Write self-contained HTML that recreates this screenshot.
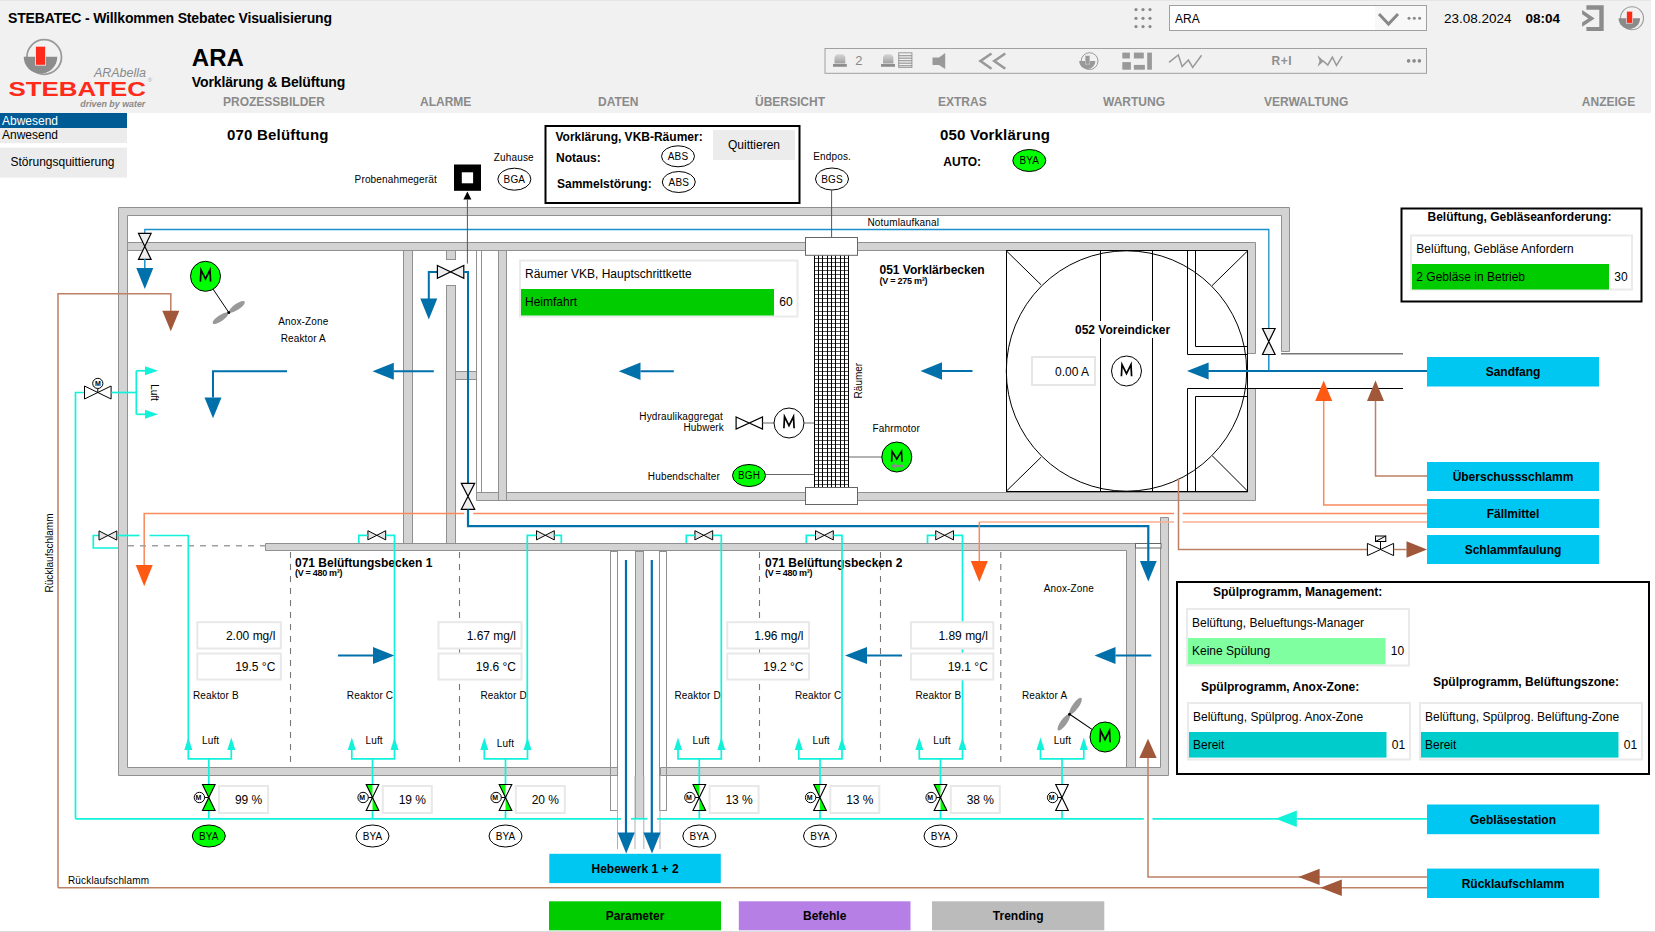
<!DOCTYPE html>
<html><head><meta charset="utf-8"><title>STEBATEC</title>
<style>
html,body{margin:0;padding:0;background:#fff;width:1655px;height:932px;overflow:hidden}
svg{display:block;font-family:"Liberation Sans", sans-serif}
text{font-family:"Liberation Sans", sans-serif}
</style></head><body>
<svg width="1655" height="932" viewBox="0 0 1655 932">
<rect x="0" y="0" width="1655" height="932" fill="#fff"/>
<rect x="0" y="931" width="1655" height="1" fill="#dcdcdc"/>
<rect x="0" y="0" width="1651" height="113" fill="#f1f1f1"/>
<rect x="0" y="0" width="1651" height="1" fill="#e6e6e6"/>
<text x="8" y="22.6" font-size="14" font-weight="bold" textLength="324">STEBATEC - Willkommen Stebatec Visualisierung</text>
<circle cx="44.2" cy="57" r="17.3" fill="none" stroke="#9a9a9a" stroke-width="1.8"/>
<path d="M23.7,56.8 A16.8,16.8 0 0 0 57.3,56.8 Z" fill="#8c8c8c"/>
<rect x="35.6" y="46.2" width="10" height="19" fill="#ff2a1a" stroke="#f1f1f1" stroke-width="0.8"/>
<text x="146" y="76.6" font-size="12.5" font-style="italic" fill="#8a8a8a" text-anchor="end">ARAbella</text>
<text x="8.5" y="95.7" font-size="19.3" font-weight="bold" fill="#ff2a1a" textLength="137.5" lengthAdjust="spacingAndGlyphs">STEBATEC</text>
<text x="150" y="82" font-size="6" fill="#aaa" text-anchor="middle">®</text>
<text x="80.3" y="106.6" font-size="9" font-style="italic" font-weight="bold" fill="#8a8a8a" textLength="65" lengthAdjust="spacingAndGlyphs">driven by water</text>
<text x="191.8" y="66.2" font-size="24" font-weight="bold">ARA</text>
<text x="191.8" y="87" font-size="14" font-weight="bold" textLength="153.5">Vorklärung &amp; Belüftung</text>
<text x="223" y="105.7" font-size="12" font-weight="bold" fill="#8a8a8a">PROZESSBILDER</text>
<text x="420" y="105.7" font-size="12" font-weight="bold" fill="#8a8a8a">ALARME</text>
<text x="598" y="105.7" font-size="12" font-weight="bold" fill="#8a8a8a">DATEN</text>
<text x="755" y="105.7" font-size="12" font-weight="bold" fill="#8a8a8a">ÜBERSICHT</text>
<text x="938" y="105.7" font-size="12" font-weight="bold" fill="#8a8a8a">EXTRAS</text>
<text x="1103" y="105.7" font-size="12" font-weight="bold" fill="#8a8a8a">WARTUNG</text>
<text x="1264" y="105.7" font-size="12" font-weight="bold" fill="#8a8a8a">VERWALTUNG</text>
<text x="1581.8" y="105.7" font-size="12" font-weight="bold" fill="#8a8a8a">ANZEIGE</text>
<circle cx="1136" cy="9.6" r="1.6" fill="#8a8a8a"/>
<circle cx="1136" cy="18.3" r="1.6" fill="#8a8a8a"/>
<circle cx="1136" cy="26.6" r="1.6" fill="#8a8a8a"/>
<circle cx="1143" cy="9.6" r="1.6" fill="#8a8a8a"/>
<circle cx="1143" cy="18.3" r="1.6" fill="#8a8a8a"/>
<circle cx="1143" cy="26.6" r="1.6" fill="#8a8a8a"/>
<circle cx="1150" cy="9.6" r="1.6" fill="#8a8a8a"/>
<circle cx="1150" cy="18.3" r="1.6" fill="#8a8a8a"/>
<circle cx="1150" cy="26.6" r="1.6" fill="#8a8a8a"/>
<rect x="1169.5" y="5.5" width="257" height="25" fill="#fff" stroke="#a0a0a0" stroke-width="1"/>
<rect x="1375" y="6" width="51" height="24" fill="#f8f8f8"/>
<text x="1175" y="22.8" font-size="12">ARA</text>
<path d="M1379,14 L1388.5,24 L1398,14" fill="none" stroke="#888" stroke-width="3"/>
<circle cx="1409" cy="18.3" r="1.5" fill="#888"/>
<circle cx="1414.3" cy="18.3" r="1.5" fill="#888"/>
<circle cx="1419.6" cy="18.3" r="1.5" fill="#888"/>
<text x="1443.9" y="23.1" font-size="13.5">23.08.2024</text>
<text x="1525.6" y="23.1" font-size="13.5" font-weight="bold">08:04</text>
<path d="M1582.1,10 L1594.7,18.4 L1582.1,26.7 L1582.1,22.4 L1588.3,18.4 L1582.1,14.3 Z" fill="#8c8c8c"/>
<path d="M1586.4,5.3 L1603.7,5.3 L1603.7,31 L1586.4,31 L1586.4,27 L1599.3,27 L1599.3,9.8 L1586.4,9.8 Z" fill="#8c8c8c"/>
<circle cx="1632" cy="18.25" r="11.5" fill="none" stroke="#9c9c9c" stroke-width="1.1"/>
<path d="M1618.6,18.25 A10.75,10.75 0 0 0 1640.1,18.25 Z" fill="#8a8a8a"/>
<rect x="1626.6" y="11.2" width="6" height="12" fill="#ff2a14" stroke="#f4f4f4" stroke-width="0.6"/>
<defs><linearGradient id="lampg" x1="0" y1="0" x2="0" y2="1"><stop offset="0" stop-color="#d6d6d6"/><stop offset="1" stop-color="#a0a0a0"/></linearGradient></defs>
<rect x="825" y="48.5" width="601.5" height="24.8" fill="none" stroke="#a0a0a0" stroke-width="1"/>
<path d="M834.5,63.6 L834.5,58.2 Q834.5,54.2 838.5,54.2 L841.3,54.2 Q845.3,54.2 845.3,58.2 L845.3,63.6 Z" fill="url(#lampg)"/>
<rect x="833" y="64" width="13.799999999999955" height="2.8" fill="#8e8e8e"/>
<text x="855.3" y="64.9" font-size="13" fill="#888">2</text>
<path d="M883,63.6 L883,58.2 Q883,54.2 887,54.2 L889.4,54.2 Q893.4,54.2 893.4,58.2 L893.4,63.6 Z" fill="url(#lampg)"/>
<rect x="881" y="64" width="14" height="2.8" fill="#8e8e8e"/>
<rect x="898.7" y="52.8" width="13.2" height="14.6" fill="none" stroke="#999999" stroke-width="1"/>
<rect x="898.5" y="55.1" width="13.5" height="1.2" fill="#999999"/>
<rect x="898.5" y="57.6" width="13.5" height="1.2" fill="#999999"/>
<rect x="898.5" y="60.1" width="13.5" height="1.2" fill="#999999"/>
<rect x="898.5" y="62.6" width="13.5" height="1.2" fill="#999999"/>
<rect x="898.5" y="65.1" width="13.5" height="1.2" fill="#999999"/>
<path d="M932.5,57.5 L939,57.5 L945.2,53 L945.2,69 L939,64.9 L932.5,64.9 Z" fill="#999999"/>
<path d="M991.5,53.5 L980.5,61 L991.5,68.7 M1005.3,53.5 L994.3,61 L1005.3,68.7" fill="none" stroke="#999999" stroke-width="2.6" stroke-linejoin="miter"/>
<circle cx="1089.6" cy="61.1" r="8.4" fill="none" stroke="#999999" stroke-width="1"/>
<path d="M1079.1,61.1 A8.15,8.15 0 0 0 1095.4,61.1 Z" fill="#999999"/>
<rect x="1085" y="55.5" width="5" height="9" fill="#c8c8c8"/>
<rect x="1085.7" y="56" width="3.6" height="7.8" fill="#999999"/>
<rect x="1122.3" y="52.6" width="7.6" height="5.9" fill="#999999"/><rect x="1133.9" y="52.6" width="9.9" height="5.9" fill="#999999"/><rect x="1122.3" y="62.1" width="8.6" height="7.6" fill="#999999"/><rect x="1133.9" y="64.9" width="11" height="4.8" fill="#999999"/><rect x="1147.2" y="52.6" width="4.7" height="17.1" fill="#999999"/>
<path d="M1169,62.3 L1178.3,55 L1182.1,66.6 L1188.4,60.1 L1192.7,67.4 L1201.6,55.3" fill="none" stroke="#999999" stroke-width="1.5"/>
<text x="1271.5" y="64.7" font-size="12" font-weight="bold" fill="#8f8f8f" textLength="20">R+I</text>
<path d="M1317.5,55.3 L1323.9,60.9 L1317.5,66.8 L1319.5,60.9 Z" fill="#999999"/><path d="M1323,60.9 L1327.8,65 L1332.4,57.1 L1336.5,65.5 L1342.2,56.1" fill="none" stroke="#999999" stroke-width="1.5"/>
<circle cx="1408.6" cy="60.9" r="1.8" fill="#8a8a8a"/>
<circle cx="1414.1" cy="60.9" r="1.8" fill="#8a8a8a"/>
<circle cx="1419.4" cy="60.9" r="1.8" fill="#8a8a8a"/>
<rect x="0" y="113" width="127" height="15" fill="#005a94"/>
<text x="2" y="124.6" font-size="12" fill="#fff">Abwesend</text>
<rect x="0" y="128" width="127" height="15" fill="#ececec"/>
<text x="2" y="138.8" font-size="12">Anwesend</text>
<rect x="0" y="147.6" width="127" height="30" fill="#ececec"/>
<text x="62.5" y="165.9" font-size="12" text-anchor="middle">Störungsquittierung</text>
<polygon points="118.5,775.5 118.5,207.5 1289.5,207.5 1289.5,351.5 1281.5,351.5 1281.5,215.5 127.5,215.5 127.5,767.5 617.5,767.5 617.5,775.5" fill="#d3d3d3" stroke="#909090" stroke-width="1" stroke-linejoin="miter"/>
<polygon points="127.5,242.5 1255.5,242.5 1255.5,353.5 1247.5,353.5 1247.5,250.5 127.5,250.5" fill="#d3d3d3" stroke="#909090" stroke-width="1" stroke-linejoin="miter"/>
<polygon points="1247.5,388.5 1255.5,388.5 1255.5,500.5 476.5,500.5 476.5,492.5 1247.5,492.5" fill="#d3d3d3" stroke="#909090" stroke-width="1" stroke-linejoin="miter"/>
<polygon points="265.5,543.5 1135.5,543.5 1135.5,768.5 1126.5,768.5 1126.5,550.5 265.5,550.5" fill="#d3d3d3" stroke="#909090" stroke-width="1" stroke-linejoin="miter"/>
<polygon points="660.5,767.5 1160.5,767.5 1160.5,517.5 1168.5,517.5 1168.5,775.5 660.5,775.5" fill="#d3d3d3" stroke="#909090" stroke-width="1" stroke-linejoin="miter"/>
<rect x="403.5" y="250.5" width="9" height="293" fill="#d3d3d3" stroke="#909090" stroke-width="1" />
<rect x="446.5" y="250.5" width="9" height="9" fill="#d3d3d3" stroke="#909090" stroke-width="1" />
<rect x="446.5" y="285.5" width="9" height="258" fill="#d3d3d3" stroke="#909090" stroke-width="1" />
<rect x="455.5" y="371.5" width="22" height="8" fill="#d3d3d3" stroke="#909090" stroke-width="1" />
<rect x="498.5" y="250.5" width="8" height="250" fill="#d3d3d3" stroke="#909090" stroke-width="1" />
<rect x="476.5" y="250.5" width="5" height="242" fill="#fff" stroke="#909090" stroke-width="1" />
<rect x="635.5" y="551.5" width="8" height="267" fill="#d3d3d3" stroke="#909090" stroke-width="1" />
<rect x="610.5" y="551.5" width="7" height="259" fill="none" stroke="#909090" stroke-width="1" />
<rect x="659.5" y="551.5" width="7" height="259" fill="none" stroke="#909090" stroke-width="1" />
<rect x="1135.5" y="543.5" width="25.5" height="4.5" fill="#fff" stroke="#666" stroke-width="1" />
<line x1="617.5" y1="776" x2="617.5" y2="849" stroke="#b0b0b0" stroke-width="1" />
<line x1="635" y1="776" x2="635" y2="849" stroke="#b0b0b0" stroke-width="1" />
<line x1="643.8" y1="776" x2="643.8" y2="849" stroke="#b0b0b0" stroke-width="1" />
<line x1="660" y1="776" x2="660" y2="849" stroke="#b0b0b0" stroke-width="1" />
<polyline points="144.8,234 144.8,229.5 1268.8,229.5 1268.8,329" fill="none" stroke="#1b8fc9" stroke-width="1.3" stroke-linejoin="miter" />
<polygon points="138.5,233.4 151.10000000000002,233.4 138.5,259.4 151.10000000000002,259.4" fill="#eeeeee" stroke="#000" stroke-width="1.2" stroke-linejoin="miter"/>
<line x1="144.8" y1="259" x2="144.8" y2="268" stroke="#1b8fc9" stroke-width="1.5" />
<polygon points="144.8,289 136.3,268 153.3,268" fill="#0070aa" stroke="none" stroke-width="1" />
<polyline points="1268.8,354 1268.8,371" fill="none" stroke="#1b8fc9" stroke-width="1.5" stroke-linejoin="miter" />
<polygon points="1262.5,328.5 1275.1,328.5 1262.5,354.5 1275.1,354.5" fill="#eeeeee" stroke="#000" stroke-width="1.2" stroke-linejoin="miter"/>
<text x="867.5" y="225.5" font-size="10" font-weight="normal" text-anchor="start" fill="#000"  letter-spacing="0.15">Notumlaufkanal</text>
<rect x="454" y="164.5" width="27" height="26.3" fill="#000" stroke="none" stroke-width="1" />
<rect x="461.8" y="172.3" width="11.3" height="11" fill="#fff" stroke="none" stroke-width="1" />
<polygon points="467.4,191.5 463.4,199.5 471.4,199.5" fill="#000" stroke="none" stroke-width="1" />
<line x1="467.4" y1="199" x2="467.4" y2="263.6" stroke="#555" stroke-width="1" />
<text x="354.6" y="182.7" font-size="10" font-weight="normal" text-anchor="start" fill="#000"  letter-spacing="0.15">Probenahmegerät</text>
<text x="493.8" y="160.7" font-size="10" font-weight="normal" text-anchor="start" fill="#000"  letter-spacing="0.15">Zuhause</text>
<ellipse cx="514.4" cy="179.2" rx="16.5" ry="11" fill="#fff" stroke="#000" stroke-width="1"/>
<text x="514.4" y="182.79999999999998" font-size="10" font-weight="normal" text-anchor="middle" fill="#000"  letter-spacing="0.15">BGA</text>
<polyline points="428.8,304 428.8,271.9 437.5,271.9" fill="none" stroke="#0070aa" stroke-width="2" stroke-linejoin="miter" />
<polygon points="428.8,319.5 420.3,298.5 437.3,298.5" fill="#0070aa" stroke="none" stroke-width="1" />
<polygon points="437.40000000000003,265.5 463.8,278.29999999999995 463.8,265.5 437.40000000000003,278.29999999999995" fill="#eeeeee" stroke="#000" stroke-width="1.2" stroke-linejoin="miter"/>
<polyline points="463.8,271.9 468,271.9 468,483.3" fill="none" stroke="#0070aa" stroke-width="2" stroke-linejoin="miter" />
<polygon points="461.3,483.3 474.7,483.3 461.3,509.3 474.7,509.3" fill="#eeeeee" stroke="#000" stroke-width="1.2" stroke-linejoin="miter"/>
<polyline points="468,509.4 468,526.2 1148.3,526.2 1148.3,561" fill="none" stroke="#0070aa" stroke-width="2.2" stroke-linejoin="miter" />
<polygon points="1148.3,581.5 1139.8999999999999,561.0 1156.7,561.0" fill="#0070aa" stroke="none" stroke-width="1" />
<rect x="545.5" y="126" width="254" height="77" fill="#fff" stroke="#000" stroke-width="2"/>
<text x="555.5" y="140.7" font-size="12" font-weight="bold" text-anchor="start" fill="#000" >Vorklärung, VKB-Räumer:</text>
<text x="556" y="161.7" font-size="12" font-weight="bold" text-anchor="start" fill="#000" >Notaus:</text>
<text x="557" y="188" font-size="12" font-weight="bold" text-anchor="start" fill="#000" >Sammelstörung:</text>
<ellipse cx="678" cy="156.3" rx="16.5" ry="10.5" fill="#fff" stroke="#000" stroke-width="1"/>
<text x="678" y="159.9" font-size="10" font-weight="normal" text-anchor="middle" fill="#000"  letter-spacing="0.15">ABS</text>
<ellipse cx="678.8" cy="182" rx="16.5" ry="10.5" fill="#fff" stroke="#000" stroke-width="1"/>
<text x="678.8" y="185.6" font-size="10" font-weight="normal" text-anchor="middle" fill="#000"  letter-spacing="0.15">ABS</text>
<rect x="713" y="130" width="82" height="30" fill="#ececec" stroke="none" stroke-width="1" />
<text x="754" y="148.7" font-size="12" font-weight="normal" text-anchor="middle" fill="#000" >Quittieren</text>
<text x="813.3" y="160" font-size="10" font-weight="normal" text-anchor="start" fill="#000"  letter-spacing="0.15">Endpos.</text>
<ellipse cx="832" cy="179" rx="16.5" ry="11" fill="#fff" stroke="#000" stroke-width="1"/>
<text x="832" y="182.6" font-size="10" font-weight="normal" text-anchor="middle" fill="#000"  letter-spacing="0.15">BGS</text>
<line x1="831.6" y1="190" x2="831.6" y2="237.5" stroke="#555" stroke-width="1" />
<text x="227" y="139.7" font-size="15" font-weight="bold" text-anchor="start" fill="#000" textLength="101.5">070 Belüftung</text>
<text x="940" y="140" font-size="15" font-weight="bold" text-anchor="start" fill="#000" textLength="110">050 Vorklärung</text>
<text x="943.3" y="166.3" font-size="12" font-weight="bold" text-anchor="start" fill="#000" >AUTO:</text>
<ellipse cx="1029.3" cy="160.5" rx="16.5" ry="11" fill="#00ff00" stroke="#000" stroke-width="1"/>
<text x="1029.3" y="164.1" font-size="10" font-weight="normal" text-anchor="middle" fill="#000"  letter-spacing="0.15">BYA</text>
<g shape-rendering="crispEdges">
<rect x="814" y="255" width="34.5" height="232" fill="#fff" stroke="none" stroke-width="1" />
<line x1="814" y1="258.5" x2="848.5" y2="258.5" stroke="#555" stroke-width="1" />
<line x1="814" y1="262.54" x2="848.5" y2="262.54" stroke="#555" stroke-width="1" />
<line x1="814" y1="266.58000000000004" x2="848.5" y2="266.58000000000004" stroke="#555" stroke-width="1" />
<line x1="814" y1="270.62000000000006" x2="848.5" y2="270.62000000000006" stroke="#555" stroke-width="1" />
<line x1="814" y1="274.6600000000001" x2="848.5" y2="274.6600000000001" stroke="#555" stroke-width="1" />
<line x1="814" y1="278.7000000000001" x2="848.5" y2="278.7000000000001" stroke="#555" stroke-width="1" />
<line x1="814" y1="282.7400000000001" x2="848.5" y2="282.7400000000001" stroke="#555" stroke-width="1" />
<line x1="814" y1="286.78000000000014" x2="848.5" y2="286.78000000000014" stroke="#555" stroke-width="1" />
<line x1="814" y1="290.82000000000016" x2="848.5" y2="290.82000000000016" stroke="#555" stroke-width="1" />
<line x1="814" y1="294.8600000000002" x2="848.5" y2="294.8600000000002" stroke="#555" stroke-width="1" />
<line x1="814" y1="298.9000000000002" x2="848.5" y2="298.9000000000002" stroke="#555" stroke-width="1" />
<line x1="814" y1="302.9400000000002" x2="848.5" y2="302.9400000000002" stroke="#555" stroke-width="1" />
<line x1="814" y1="306.98000000000025" x2="848.5" y2="306.98000000000025" stroke="#555" stroke-width="1" />
<line x1="814" y1="311.02000000000027" x2="848.5" y2="311.02000000000027" stroke="#555" stroke-width="1" />
<line x1="814" y1="315.0600000000003" x2="848.5" y2="315.0600000000003" stroke="#555" stroke-width="1" />
<line x1="814" y1="319.1000000000003" x2="848.5" y2="319.1000000000003" stroke="#555" stroke-width="1" />
<line x1="814" y1="323.1400000000003" x2="848.5" y2="323.1400000000003" stroke="#555" stroke-width="1" />
<line x1="814" y1="327.18000000000035" x2="848.5" y2="327.18000000000035" stroke="#555" stroke-width="1" />
<line x1="814" y1="331.22000000000037" x2="848.5" y2="331.22000000000037" stroke="#555" stroke-width="1" />
<line x1="814" y1="335.2600000000004" x2="848.5" y2="335.2600000000004" stroke="#555" stroke-width="1" />
<line x1="814" y1="339.3000000000004" x2="848.5" y2="339.3000000000004" stroke="#555" stroke-width="1" />
<line x1="814" y1="343.34000000000043" x2="848.5" y2="343.34000000000043" stroke="#555" stroke-width="1" />
<line x1="814" y1="347.38000000000045" x2="848.5" y2="347.38000000000045" stroke="#555" stroke-width="1" />
<line x1="814" y1="351.42000000000047" x2="848.5" y2="351.42000000000047" stroke="#555" stroke-width="1" />
<line x1="814" y1="355.4600000000005" x2="848.5" y2="355.4600000000005" stroke="#555" stroke-width="1" />
<line x1="814" y1="359.5000000000005" x2="848.5" y2="359.5000000000005" stroke="#555" stroke-width="1" />
<line x1="814" y1="363.54000000000053" x2="848.5" y2="363.54000000000053" stroke="#555" stroke-width="1" />
<line x1="814" y1="367.58000000000055" x2="848.5" y2="367.58000000000055" stroke="#555" stroke-width="1" />
<line x1="814" y1="371.6200000000006" x2="848.5" y2="371.6200000000006" stroke="#555" stroke-width="1" />
<line x1="814" y1="375.6600000000006" x2="848.5" y2="375.6600000000006" stroke="#555" stroke-width="1" />
<line x1="814" y1="379.7000000000006" x2="848.5" y2="379.7000000000006" stroke="#555" stroke-width="1" />
<line x1="814" y1="383.74000000000063" x2="848.5" y2="383.74000000000063" stroke="#555" stroke-width="1" />
<line x1="814" y1="387.78000000000065" x2="848.5" y2="387.78000000000065" stroke="#555" stroke-width="1" />
<line x1="814" y1="391.8200000000007" x2="848.5" y2="391.8200000000007" stroke="#555" stroke-width="1" />
<line x1="814" y1="395.8600000000007" x2="848.5" y2="395.8600000000007" stroke="#555" stroke-width="1" />
<line x1="814" y1="399.9000000000007" x2="848.5" y2="399.9000000000007" stroke="#555" stroke-width="1" />
<line x1="814" y1="403.94000000000074" x2="848.5" y2="403.94000000000074" stroke="#555" stroke-width="1" />
<line x1="814" y1="407.98000000000076" x2="848.5" y2="407.98000000000076" stroke="#555" stroke-width="1" />
<line x1="814" y1="412.0200000000008" x2="848.5" y2="412.0200000000008" stroke="#555" stroke-width="1" />
<line x1="814" y1="416.0600000000008" x2="848.5" y2="416.0600000000008" stroke="#555" stroke-width="1" />
<line x1="814" y1="420.1000000000008" x2="848.5" y2="420.1000000000008" stroke="#555" stroke-width="1" />
<line x1="814" y1="424.14000000000084" x2="848.5" y2="424.14000000000084" stroke="#555" stroke-width="1" />
<line x1="814" y1="428.18000000000086" x2="848.5" y2="428.18000000000086" stroke="#555" stroke-width="1" />
<line x1="814" y1="432.2200000000009" x2="848.5" y2="432.2200000000009" stroke="#555" stroke-width="1" />
<line x1="814" y1="436.2600000000009" x2="848.5" y2="436.2600000000009" stroke="#555" stroke-width="1" />
<line x1="814" y1="440.3000000000009" x2="848.5" y2="440.3000000000009" stroke="#555" stroke-width="1" />
<line x1="814" y1="444.34000000000094" x2="848.5" y2="444.34000000000094" stroke="#555" stroke-width="1" />
<line x1="814" y1="448.38000000000096" x2="848.5" y2="448.38000000000096" stroke="#555" stroke-width="1" />
<line x1="814" y1="452.420000000001" x2="848.5" y2="452.420000000001" stroke="#555" stroke-width="1" />
<line x1="814" y1="456.460000000001" x2="848.5" y2="456.460000000001" stroke="#555" stroke-width="1" />
<line x1="814" y1="460.500000000001" x2="848.5" y2="460.500000000001" stroke="#555" stroke-width="1" />
<line x1="814" y1="464.54000000000104" x2="848.5" y2="464.54000000000104" stroke="#555" stroke-width="1" />
<line x1="814" y1="468.58000000000106" x2="848.5" y2="468.58000000000106" stroke="#555" stroke-width="1" />
<line x1="814" y1="472.6200000000011" x2="848.5" y2="472.6200000000011" stroke="#555" stroke-width="1" />
<line x1="814" y1="476.6600000000011" x2="848.5" y2="476.6600000000011" stroke="#555" stroke-width="1" />
<line x1="814" y1="480.7000000000011" x2="848.5" y2="480.7000000000011" stroke="#555" stroke-width="1" />
<line x1="814" y1="484.74000000000115" x2="848.5" y2="484.74000000000115" stroke="#555" stroke-width="1" />
<line x1="814.5" y1="255" x2="814.5" y2="487.5" stroke="#000" stroke-width="1" />
<line x1="818.5" y1="255" x2="818.5" y2="487.5" stroke="#000" stroke-width="1" />
<line x1="822.5" y1="255" x2="822.5" y2="487.5" stroke="#000" stroke-width="1" />
<line x1="827.5" y1="255" x2="827.5" y2="487.5" stroke="#000" stroke-width="1" />
<line x1="831.5" y1="255" x2="831.5" y2="487.5" stroke="#000" stroke-width="1" />
<line x1="835.5" y1="255" x2="835.5" y2="487.5" stroke="#000" stroke-width="1" />
<line x1="840.5" y1="255" x2="840.5" y2="487.5" stroke="#000" stroke-width="1" />
<line x1="844.5" y1="255" x2="844.5" y2="487.5" stroke="#000" stroke-width="1" />
<line x1="848.5" y1="255" x2="848.5" y2="487.5" stroke="#000" stroke-width="1" />
</g>
<rect x="805.5" y="237.5" width="52" height="17.8" fill="#fff" stroke="#666" stroke-width="1" />
<rect x="805.5" y="487.5" width="52" height="17" fill="#fff" stroke="#666" stroke-width="1" />
<text x="0" y="0" font-size="10" transform="translate(861.5,380.6) rotate(-90)" text-anchor="middle">Räumer</text>
<rect x="520" y="260.5" width="277.5" height="56" fill="#fff" stroke="#eaeaea" stroke-width="2" />
<rect x="521" y="289" width="253" height="26.5" fill="#00cc00" stroke="none" stroke-width="1" />
<text x="525" y="277.5" font-size="12" font-weight="normal" text-anchor="start" fill="#000" >Räumer VKB, Hauptschrittkette</text>
<text x="525" y="306.3" font-size="12" font-weight="normal" text-anchor="start" fill="#000" >Heimfahrt</text>
<text x="786" y="306.3" font-size="12" font-weight="normal" text-anchor="middle" fill="#000" >60</text>
<text x="879.5" y="273.8" font-size="12" font-weight="bold" text-anchor="start" fill="#000" >051 Vorklärbecken</text>
<text x="879.5" y="283.8" font-size="9" font-weight="bold" text-anchor="start" fill="#000" textLength="48">(V = 275 m³)</text>
<text x="723" y="419.5" font-size="10" font-weight="normal" text-anchor="end" fill="#000"  letter-spacing="0.15">Hydraulikaggregat</text>
<text x="724" y="431.3" font-size="10" font-weight="normal" text-anchor="end" fill="#000"  letter-spacing="0.15">Hubwerk</text>
<polygon points="736.0999999999999,417 762.5,429 762.5,417 736.0999999999999,429" fill="#fff" stroke="#000" stroke-width="1.2" stroke-linejoin="miter"/>
<line x1="762.5" y1="423" x2="774" y2="423" stroke="#666" stroke-width="1" />
<circle cx="789" cy="423" r="15" fill="#fff" stroke="#000" stroke-width="1"/>
<path d="M783.9,428.3 L784.5,416.6 L789,425.6 L793.5,416.6 L794.1,428.3" fill="none" stroke="#000" stroke-width="1.7" stroke-linejoin="miter"/>
<line x1="804" y1="423" x2="814" y2="423" stroke="#666" stroke-width="1" />
<text x="720" y="479.5" font-size="10" font-weight="normal" text-anchor="end" fill="#000"  letter-spacing="0.15">Hubendschalter</text>
<ellipse cx="749" cy="475.5" rx="16.5" ry="11" fill="#00ff00" stroke="#000" stroke-width="1"/>
<text x="749" y="479.1" font-size="10" font-weight="normal" text-anchor="middle" fill="#000"  letter-spacing="0.15">BGH</text>
<line x1="765.5" y1="474.5" x2="814" y2="474.5" stroke="#666" stroke-width="1" />
<text x="872.5" y="432" font-size="10" font-weight="normal" text-anchor="start" fill="#000"  letter-spacing="0.15">Fahrmotor</text>
<line x1="849" y1="457" x2="882" y2="457" stroke="#666" stroke-width="1" />
<circle cx="896.8" cy="457" r="15" fill="#00ff00" stroke="#000" stroke-width="1"/>
<path d="M891.6,461.8 L892.1,451.3 L896.8,459 L901.5,451.3 L902,461.8" fill="none" stroke="#000" stroke-width="1.6"/>
<path d="M890.8,466 L894.5,462.8 L894.5,464.7 L903,464.7 L903,467.3 L894.5,467.3 L894.5,469.2 Z" fill="#8a8a8a"/>
<line x1="640.5" y1="371.3" x2="673.8" y2="371.3" stroke="#0070aa" stroke-width="2" />
<polygon points="618.8,371.3 640.5,362.6 640.5,380.0" fill="#0070aa" stroke="none" stroke-width="1" />
<line x1="942" y1="371" x2="972.5" y2="371" stroke="#0070aa" stroke-width="2" />
<polygon points="920.5,371 942.0,362.3 942.0,379.7" fill="#0070aa" stroke="none" stroke-width="1" />
<g fill="none" stroke="#000" stroke-width="1">
<rect x="1006.5" y="250.5" width="241" height="241"/>
<circle cx="1126.5" cy="371" r="120.2"/>
<line x1="1100.5" y1="251" x2="1100.5" y2="491"/>
<line x1="1152.5" y1="251" x2="1152.5" y2="491"/>
<line x1="1006.5" y1="251" x2="1041.3" y2="285"/>
<line x1="1006.5" y1="491" x2="1041.3" y2="457"/>
<line x1="1247.5" y1="251" x2="1212" y2="285.7"/>
<line x1="1212.5" y1="456" x2="1247.5" y2="491"/>
<polyline points="1187.5,251 1187.5,354.5 1247.5,354.5"/>
<polyline points="1195.5,251 1195.5,346.5 1247.5,346.5"/>
<polyline points="1403,388.5 1187.5,388.5 1187.5,491"/>
<polyline points="1247.5,396.5 1195.5,396.5 1195.5,491"/>
</g>
<line x1="1281" y1="353.8" x2="1403" y2="353.8" stroke="#777" stroke-width="1.5" />
<rect x="1073" y="321" width="100" height="17" fill="#fff" stroke="none" stroke-width="1" />
<text x="1075" y="333.8" font-size="12" font-weight="bold" text-anchor="start" fill="#000" >052 Voreindicker</text>
<rect x="1032" y="357" width="63" height="28" fill="#fff" stroke="#e6e6e6" stroke-width="2" />
<text x="1089" y="376" font-size="12" font-weight="normal" text-anchor="end" fill="#000" >0.00 A</text>
<circle cx="1126.5" cy="371" r="15" fill="#fff" stroke="#000" stroke-width="1"/>
<path d="M1121.4,376.3 L1122.0,364.6 L1126.5,373.6 L1131.0,364.6 L1131.6,376.3" fill="none" stroke="#000" stroke-width="1.7" stroke-linejoin="miter"/>
<line x1="1208" y1="371" x2="1427" y2="371" stroke="#0070aa" stroke-width="2" />
<polygon points="1187,371 1208.6,362.5 1208.6,379.5" fill="#0070aa" stroke="none" stroke-width="1" />
<rect x="1427" y="357" width="172" height="29.5" fill="#00c6f2" stroke="none" stroke-width="1" />
<text x="1513.0" y="376.05" font-size="12" font-weight="bold" text-anchor="middle" fill="#000" >Sandfang</text>
<polyline points="1427,476 1375.5,476 1375.5,401" fill="none" stroke="#bd8064" stroke-width="1.5" stroke-linejoin="miter" />
<polygon points="1375.5,380.5 1367.0,401.0 1384.0,401.0" fill="#a0573a" stroke="none" stroke-width="1" />
<polyline points="1427,505 1323.7,505 1323.7,401" fill="none" stroke="#f88a5c" stroke-width="1.5" stroke-linejoin="miter" />
<polygon points="1323.7,380.5 1315.2,401.0 1332.2,401.0" fill="#ff5a14" stroke="none" stroke-width="1" />
<rect x="1427" y="462" width="172" height="29" fill="#00c6f2" stroke="none" stroke-width="1" />
<text x="1513.0" y="480.8" font-size="12" font-weight="bold" text-anchor="middle" fill="#000" >Überschussschlamm</text>
<rect x="1427" y="499" width="172" height="29" fill="#00c6f2" stroke="none" stroke-width="1" />
<text x="1513.0" y="517.8" font-size="12" font-weight="bold" text-anchor="middle" fill="#000" >Fällmittel</text>
<rect x="1427" y="535" width="172" height="29" fill="#00c6f2" stroke="none" stroke-width="1" />
<text x="1513.0" y="553.8" font-size="12" font-weight="bold" text-anchor="middle" fill="#000" >Schlammfaulung</text>
<polyline points="144.2,565 144.2,513.5 464.3,513.5" fill="none" stroke="#f88a5c" stroke-width="1.5" stroke-linejoin="miter" />
<line x1="473.2" y1="513.5" x2="1174" y2="513.5" stroke="#f88a5c" stroke-width="1.5" />
<line x1="1182.7" y1="513.5" x2="1427" y2="513.5" stroke="#f88a5c" stroke-width="1.5" />
<polygon points="144.2,586.3 135.7,565.0 152.7,565.0" fill="#ff5a14" stroke="none" stroke-width="1" />
<line x1="979.3" y1="522" x2="1174" y2="522" stroke="#fbae90" stroke-width="1.5" />
<line x1="979.3" y1="522" x2="979.3" y2="561" stroke="#f88a5c" stroke-width="1.5" />
<line x1="1182.7" y1="522" x2="1427" y2="522" stroke="#fbae90" stroke-width="1.5" />
<polygon points="979.3,582 970.8,561 987.8,561" fill="#ff5a14" stroke="none" stroke-width="1" />
<polyline points="1178.5,478.6 1178.5,549.5 1367.4,549.5" fill="none" stroke="#bd8064" stroke-width="1.5" stroke-linejoin="miter" />
<polygon points="1367.4,543.4 1393.6,555.6 1393.6,543.4 1367.4,555.6" fill="#fff" stroke="#000" stroke-width="1" stroke-linejoin="miter"/>
<rect x="1375.5" y="536" width="10.3" height="5.5" fill="#f4f4f4" stroke="#000" stroke-width="1" />
<line x1="1375.5" y1="541.5" x2="1385.8" y2="536" stroke="#000" stroke-width="1" />
<line x1="1380.5" y1="541.5" x2="1380.5" y2="549.5" stroke="#000" stroke-width="1" />
<line x1="1393.6" y1="549.5" x2="1406.5" y2="549.5" stroke="#bd8064" stroke-width="1.5" />
<polygon points="1427,549.5 1406.5,541.25 1406.5,557.75" fill="#a0573a" stroke="none" stroke-width="1" />
<rect x="1401.5" y="208.5" width="240" height="93" fill="#fff" stroke="#000" stroke-width="2"/>
<text x="1519.5" y="221.3" font-size="12" font-weight="bold" text-anchor="middle" fill="#000" >Belüftung, Gebläseanforderung:</text>
<rect x="1411" y="235.5" width="221" height="54" fill="#fff" stroke="#eaeaea" stroke-width="2" />
<rect x="1412" y="264" width="197" height="25.5" fill="#00cc00" stroke="none" stroke-width="1" />
<text x="1416.3" y="252.5" font-size="12" font-weight="normal" text-anchor="start" fill="#000" >Belüftung, Gebläse Anfordern</text>
<text x="1416.3" y="280.5" font-size="12" font-weight="normal" text-anchor="start" fill="#000" >2 Gebläse in Betrieb</text>
<text x="1621" y="280.5" font-size="12" font-weight="normal" text-anchor="middle" fill="#000" >30</text>
<circle cx="205.5" cy="276.3" r="15" fill="#00ff00" stroke="#000" stroke-width="1"/>
<path d="M200.4,281.6 L201.0,269.90000000000003 L205.5,278.90000000000003 L210.0,269.90000000000003 L210.6,281.6" fill="none" stroke="#000" stroke-width="1.7" stroke-linejoin="miter"/>
<line x1="213" y1="289" x2="228.8" y2="312.5" stroke="#000" stroke-width="1" />
<ellipse cx="237" cy="306.8" rx="9.3" ry="3" fill="#999" transform="rotate(-34 237 306.8)"/>
<ellipse cx="220.5" cy="318.2" rx="9.3" ry="3" fill="#999" transform="rotate(-34 220.5 318.2)"/>
<circle cx="228.8" cy="312.5" r="1.5" fill="#000"/>
<polyline points="58,887.8 58,293.8 170.8,293.8 170.8,311" fill="none" stroke="#bd8064" stroke-width="1.5" stroke-linejoin="miter" />
<polygon points="170.8,331.3 162.3,310.8 179.3,310.8" fill="#a0573a" stroke="none" stroke-width="1" />
<text x="303.3" y="325" font-size="10" font-weight="normal" text-anchor="middle" fill="#000"  letter-spacing="0.15">Anox-Zone</text>
<text x="303.3" y="342" font-size="10" font-weight="normal" text-anchor="middle" fill="#000"  letter-spacing="0.15">Reaktor A</text>
<polyline points="287,371.3 213,371.3 213,397.5" fill="none" stroke="#0070aa" stroke-width="2" stroke-linejoin="miter" />
<polygon points="213,418.3 204.5,397.5 221.5,397.5" fill="#0070aa" stroke="none" stroke-width="1" />
<line x1="393.8" y1="371.3" x2="433.8" y2="371.3" stroke="#0070aa" stroke-width="2" />
<polygon points="372.5,371.3 393.8,362.8 393.8,379.8" fill="#0070aa" stroke="none" stroke-width="1" />
<polyline points="75.5,818.8 75.5,392.5 84.5,392.5" fill="none" stroke="#12f2da" stroke-width="1.7" stroke-linejoin="miter" />
<polygon points="84.5,386.0 111.1,399.0 111.1,386.0 84.5,399.0" fill="#fff" stroke="#000" stroke-width="1" stroke-linejoin="miter"/>
<line x1="97.8" y1="388.5" x2="97.8" y2="392.5" stroke="#000" stroke-width="1" />
<circle cx="97.8" cy="383.4" r="5.1" fill="#fff" stroke="#000" stroke-width="1"/>
<text x="97.8" y="386" font-size="7" font-weight="bold" text-anchor="middle" fill="#000" >M</text>
<line x1="111.3" y1="392.5" x2="136.3" y2="392.5" stroke="#12f2da" stroke-width="1.7" />
<line x1="136.3" y1="370.8" x2="136.3" y2="414.3" stroke="#12f2da" stroke-width="1.7" />
<line x1="136.3" y1="370.8" x2="145" y2="370.8" stroke="#12f2da" stroke-width="1.7" />
<line x1="136.3" y1="414.3" x2="145" y2="414.3" stroke="#12f2da" stroke-width="1.7" />
<polygon points="158,370.8 145,366.3 145,375.3" fill="#12f2da" stroke="none" stroke-width="1" />
<polygon points="158,414.3 145,409.8 145,418.8" fill="#12f2da" stroke="none" stroke-width="1" />
<text x="0" y="0" font-size="10" transform="translate(151,392.5) rotate(90)" text-anchor="middle">Luft</text>
<text x="0" y="0" font-size="10" transform="translate(52.5,553) rotate(-90)" text-anchor="middle">Rücklaufschlamm</text>
<line x1="128" y1="545.8" x2="265.5" y2="545.8" stroke="#a0a0a0" stroke-width="1.4" stroke-dasharray="6,6"/>
<line x1="290.5" y1="552" x2="290.5" y2="768" stroke="#777" stroke-width="1.1" stroke-dasharray="6,6"/>
<line x1="459.5" y1="552" x2="459.5" y2="768" stroke="#777" stroke-width="1.1" stroke-dasharray="6,6"/>
<line x1="759.5" y1="552" x2="759.5" y2="768" stroke="#777" stroke-width="1.1" stroke-dasharray="6,6"/>
<line x1="880.5" y1="552" x2="880.5" y2="768" stroke="#777" stroke-width="1.1" stroke-dasharray="6,6"/>
<line x1="1000.8" y1="552" x2="1000.8" y2="768" stroke="#777" stroke-width="1.1" stroke-dasharray="6,6"/>
<text x="295" y="567" font-size="12" font-weight="bold" text-anchor="start" fill="#000" >071 Belüftungsbecken 1</text>
<text x="295" y="576.3" font-size="9" font-weight="bold" text-anchor="start" fill="#000" textLength="47.5">(V = 480 m³)</text>
<text x="765" y="567" font-size="12" font-weight="bold" text-anchor="start" fill="#000" >071 Belüftungsbecken 2</text>
<text x="765" y="576.3" font-size="9" font-weight="bold" text-anchor="start" fill="#000" textLength="47.5">(V = 480 m³)</text>
<text x="1068.8" y="591.8" font-size="10" font-weight="normal" text-anchor="middle" fill="#000"  letter-spacing="0.15">Anox-Zone</text>
<line x1="338" y1="655.5" x2="373" y2="655.5" stroke="#0070aa" stroke-width="2" />
<polygon points="394.3,655.5 373.0,647.0 373.0,664.0" fill="#0070aa" stroke="none" stroke-width="1" />
<line x1="867" y1="655.5" x2="902" y2="655.5" stroke="#0070aa" stroke-width="2" />
<polygon points="845,655.5 867,647.0 867,664.0" fill="#0070aa" stroke="none" stroke-width="1" />
<line x1="1115.5" y1="655.5" x2="1151.3" y2="655.5" stroke="#0070aa" stroke-width="2" />
<polygon points="1094.5,655.5 1115.5,647.0 1115.5,664.0" fill="#0070aa" stroke="none" stroke-width="1" />
<text x="193" y="698.5" font-size="10" font-weight="normal" text-anchor="start" fill="#000"  letter-spacing="0.15">Reaktor B</text>
<text x="346.8" y="698.5" font-size="10" font-weight="normal" text-anchor="start" fill="#000"  letter-spacing="0.15">Reaktor C</text>
<text x="480.5" y="698.5" font-size="10" font-weight="normal" text-anchor="start" fill="#000"  letter-spacing="0.15">Reaktor D</text>
<text x="674.5" y="698.5" font-size="10" font-weight="normal" text-anchor="start" fill="#000"  letter-spacing="0.15">Reaktor D</text>
<text x="795" y="698.5" font-size="10" font-weight="normal" text-anchor="start" fill="#000"  letter-spacing="0.15">Reaktor C</text>
<text x="915.5" y="698.5" font-size="10" font-weight="normal" text-anchor="start" fill="#000"  letter-spacing="0.15">Reaktor B</text>
<text x="1022" y="698.5" font-size="10" font-weight="normal" text-anchor="start" fill="#000"  letter-spacing="0.15">Reaktor A</text>
<polyline points="118,548 93.3,548 93.3,535.5 98.8,535.5" fill="none" stroke="#12f2da" stroke-width="1.7" stroke-linejoin="miter" />
<polygon points="99.0,530.9 116.80000000000001,540.1 116.80000000000001,530.9 99.0,540.1" fill="#e6e6e6" stroke="#000" stroke-width="1" stroke-linejoin="miter"/>
<polyline points="116.8,535.5 139.5,535.5" fill="none" stroke="#12f2da" stroke-width="1.7" stroke-linejoin="miter" />
<polyline points="149.5,535.5 188.3,535.5 188.3,749" fill="none" stroke="#12f2da" stroke-width="1.7" stroke-linejoin="miter" />
<polygon points="367.90000000000003,530.6999999999999 385.7,539.9 385.7,530.6999999999999 367.90000000000003,539.9" fill="#e4e4e4" stroke="#000" stroke-width="1" stroke-linejoin="miter"/>
<polyline points="358.8,543 358.8,535.3 367.8,535.3" fill="none" stroke="#12f2da" stroke-width="1.7" stroke-linejoin="miter" />
<polyline points="385.8,535.3 394.5,535.3 394.5,749" fill="none" stroke="#12f2da" stroke-width="1.7" stroke-linejoin="miter" />
<polygon points="536.5,530.6999999999999 554.3,539.9 554.3,530.6999999999999 536.5,539.9" fill="#e4e4e4" stroke="#000" stroke-width="1" stroke-linejoin="miter"/>
<polyline points="527.3,749 527.3,535.3 536.4,535.3" fill="none" stroke="#12f2da" stroke-width="1.7" stroke-linejoin="miter" />
<polyline points="554.4,535.3 561.3,535.3 561.3,543" fill="none" stroke="#12f2da" stroke-width="1.7" stroke-linejoin="miter" />
<polygon points="694.9,530.6999999999999 712.6999999999999,539.9 712.6999999999999,530.6999999999999 694.9,539.9" fill="#e4e4e4" stroke="#000" stroke-width="1" stroke-linejoin="miter"/>
<polyline points="686.3,543 686.3,535.3 694.8,535.3" fill="none" stroke="#12f2da" stroke-width="1.7" stroke-linejoin="miter" />
<polyline points="712.8,535.3 721.3,535.3 721.3,749" fill="none" stroke="#12f2da" stroke-width="1.7" stroke-linejoin="miter" />
<polygon points="815.5,530.6999999999999 833.3,539.9 833.3,530.6999999999999 815.5,539.9" fill="#e4e4e4" stroke="#000" stroke-width="1" stroke-linejoin="miter"/>
<polyline points="806.3,543 806.3,535.3 815.4,535.3" fill="none" stroke="#12f2da" stroke-width="1.7" stroke-linejoin="miter" />
<polyline points="833.4,535.3 842,535.3 842,749" fill="none" stroke="#12f2da" stroke-width="1.7" stroke-linejoin="miter" />
<polygon points="935.7,530.6999999999999 953.5,539.9 953.5,530.6999999999999 935.7,539.9" fill="#e4e4e4" stroke="#000" stroke-width="1" stroke-linejoin="miter"/>
<polyline points="927.5,543 927.5,535.3 935.6,535.3" fill="none" stroke="#12f2da" stroke-width="1.7" stroke-linejoin="miter" />
<polyline points="953.6,535.3 962.5,535.3 962.5,749" fill="none" stroke="#12f2da" stroke-width="1.7" stroke-linejoin="miter" />
<rect x="197.3" y="622.2" width="83.5" height="26.3" fill="#fff" stroke="#e8e8e8" stroke-width="2" />
<rect x="197.3" y="653.5" width="83.5" height="26" fill="#fff" stroke="#e8e8e8" stroke-width="2" />
<text x="275.3" y="639.8" font-size="12" font-weight="normal" text-anchor="end" fill="#000" >2.00 mg/l</text>
<text x="275.3" y="671" font-size="12" font-weight="normal" text-anchor="end" fill="#000" >19.5 °C</text>
<rect x="438.5" y="622.2" width="83.0" height="26.3" fill="#fff" stroke="#e8e8e8" stroke-width="2" />
<rect x="438.5" y="653.5" width="83.0" height="26" fill="#fff" stroke="#e8e8e8" stroke-width="2" />
<text x="516.0" y="639.8" font-size="12" font-weight="normal" text-anchor="end" fill="#000" >1.67 mg/l</text>
<text x="516.0" y="671" font-size="12" font-weight="normal" text-anchor="end" fill="#000" >19.6 °C</text>
<rect x="727.3" y="622.2" width="81.70000000000005" height="26.3" fill="#fff" stroke="#e8e8e8" stroke-width="2" />
<rect x="727.3" y="653.5" width="81.70000000000005" height="26" fill="#fff" stroke="#e8e8e8" stroke-width="2" />
<text x="803.5" y="639.8" font-size="12" font-weight="normal" text-anchor="end" fill="#000" >1.96 mg/l</text>
<text x="803.5" y="671" font-size="12" font-weight="normal" text-anchor="end" fill="#000" >19.2 °C</text>
<rect x="911" y="622.2" width="82.29999999999995" height="26.3" fill="#fff" stroke="#e8e8e8" stroke-width="2" />
<rect x="911" y="653.5" width="82.29999999999995" height="26" fill="#fff" stroke="#e8e8e8" stroke-width="2" />
<text x="987.8" y="639.8" font-size="12" font-weight="normal" text-anchor="end" fill="#000" >1.89 mg/l</text>
<text x="987.8" y="671" font-size="12" font-weight="normal" text-anchor="end" fill="#000" >19.1 °C</text>
<polyline points="188.3,749 188.3,758.8 231.3,758.8 231.3,749" fill="none" stroke="#12f2da" stroke-width="1.7" stroke-linejoin="miter" />
<polygon points="188.3,737.5 184.3,750.0 192.3,750.0" fill="#12f2da" stroke="none" stroke-width="1" />
<polygon points="231.3,737.5 227.3,750.0 235.3,750.0" fill="#12f2da" stroke="none" stroke-width="1" />
<line x1="208.8" y1="758.8" x2="208.8" y2="818.8" stroke="#12f2da" stroke-width="1.7" />
<text x="202" y="744" font-size="10" font-weight="normal" text-anchor="start" fill="#000"  letter-spacing="0.15">Luft</text>
<polyline points="351.8,749 351.8,758.8 394.5,758.8 394.5,749" fill="none" stroke="#12f2da" stroke-width="1.7" stroke-linejoin="miter" />
<polygon points="351.8,737.5 347.8,750.0 355.8,750.0" fill="#12f2da" stroke="none" stroke-width="1" />
<polygon points="394.5,737.5 390.5,750.0 398.5,750.0" fill="#12f2da" stroke="none" stroke-width="1" />
<line x1="372.5" y1="758.8" x2="372.5" y2="818.8" stroke="#12f2da" stroke-width="1.7" />
<text x="365.5" y="744" font-size="10" font-weight="normal" text-anchor="start" fill="#000"  letter-spacing="0.15">Luft</text>
<polyline points="484.3,749 484.3,758.8 527.5,758.8 527.5,749" fill="none" stroke="#12f2da" stroke-width="1.7" stroke-linejoin="miter" />
<polygon points="484.3,737.5 480.3,750.0 488.3,750.0" fill="#12f2da" stroke="none" stroke-width="1" />
<polygon points="527.5,737.5 523.5,750.0 531.5,750.0" fill="#12f2da" stroke="none" stroke-width="1" />
<line x1="505.5" y1="758.8" x2="505.5" y2="818.8" stroke="#12f2da" stroke-width="1.7" />
<text x="496.8" y="746.5" font-size="10" font-weight="normal" text-anchor="start" fill="#000"  letter-spacing="0.15">Luft</text>
<polyline points="678,749 678,758.8 721.3,758.8 721.3,749" fill="none" stroke="#12f2da" stroke-width="1.7" stroke-linejoin="miter" />
<polygon points="678,737.5 674,750.0 682,750.0" fill="#12f2da" stroke="none" stroke-width="1" />
<polygon points="721.3,737.5 717.3,750.0 725.3,750.0" fill="#12f2da" stroke="none" stroke-width="1" />
<line x1="699.3" y1="758.8" x2="699.3" y2="818.8" stroke="#12f2da" stroke-width="1.7" />
<text x="692.5" y="744" font-size="10" font-weight="normal" text-anchor="start" fill="#000"  letter-spacing="0.15">Luft</text>
<polyline points="798.8,749 798.8,758.8 842,758.8 842,749" fill="none" stroke="#12f2da" stroke-width="1.7" stroke-linejoin="miter" />
<polygon points="798.8,737.5 794.8,750.0 802.8,750.0" fill="#12f2da" stroke="none" stroke-width="1" />
<polygon points="842,737.5 838,750.0 846,750.0" fill="#12f2da" stroke="none" stroke-width="1" />
<line x1="820" y1="758.8" x2="820" y2="818.8" stroke="#12f2da" stroke-width="1.7" />
<text x="812.5" y="744" font-size="10" font-weight="normal" text-anchor="start" fill="#000"  letter-spacing="0.15">Luft</text>
<polyline points="919.3,749 919.3,758.8 962.5,758.8 962.5,749" fill="none" stroke="#12f2da" stroke-width="1.7" stroke-linejoin="miter" />
<polygon points="919.3,737.5 915.3,750.0 923.3,750.0" fill="#12f2da" stroke="none" stroke-width="1" />
<polygon points="962.5,737.5 958.5,750.0 966.5,750.0" fill="#12f2da" stroke="none" stroke-width="1" />
<line x1="940.5" y1="758.8" x2="940.5" y2="818.8" stroke="#12f2da" stroke-width="1.7" />
<text x="933.3" y="744" font-size="10" font-weight="normal" text-anchor="start" fill="#000"  letter-spacing="0.15">Luft</text>
<polyline points="1040.5,749 1040.5,758.8 1083.8,758.8 1083.8,749" fill="none" stroke="#12f2da" stroke-width="1.7" stroke-linejoin="miter" />
<polygon points="1040.5,737.5 1036.5,750.0 1044.5,750.0" fill="#12f2da" stroke="none" stroke-width="1" />
<polygon points="1083.8,737.5 1079.8,750.0 1087.8,750.0" fill="#12f2da" stroke="none" stroke-width="1" />
<line x1="1062" y1="758.8" x2="1062" y2="818.8" stroke="#12f2da" stroke-width="1.7" />
<text x="1053.8" y="744" font-size="10" font-weight="normal" text-anchor="start" fill="#000"  letter-spacing="0.15">Luft</text>
<line x1="75.5" y1="818.8" x2="621" y2="818.8" stroke="#12f2da" stroke-width="1.7" />
<line x1="631" y1="818.8" x2="647.5" y2="818.8" stroke="#12f2da" stroke-width="1.7" />
<line x1="657" y1="818.8" x2="1143.8" y2="818.8" stroke="#12f2da" stroke-width="1.7" />
<line x1="1152.5" y1="818.8" x2="1427" y2="818.8" stroke="#12f2da" stroke-width="1.7" />
<polygon points="1275.6,818.8 1296.8,810.5 1296.8,827.0999999999999" fill="#12f2da" stroke="none" stroke-width="1" />
<polygon points="202.5,784.5 215.10000000000002,784.5 202.5,810.5 215.10000000000002,810.5" fill="#fff" stroke="none" stroke-width="1" />
<polygon points="202.5,784.5 215.10000000000002,784.5 208.8,797.5" fill="#00ff00" stroke="none" stroke-width="1" />
<polygon points="202.5,810.5 215.10000000000002,810.5 208.8,797.5" fill="#00ff00" stroke="none" stroke-width="1" />
<polygon points="202.5,784.5 215.10000000000002,784.5 202.5,810.5 215.10000000000002,810.5" fill="none" stroke="#000" stroke-width="1.1" stroke-linejoin="miter"/>
<line x1="203.8" y1="797.5" x2="208.8" y2="797.5" stroke="#000" stroke-width="1" />
<circle cx="199.4" cy="797.5" r="5.2" fill="#fff" stroke="#000" stroke-width="1"/>
<text x="198.5" y="800.1" font-size="7" font-weight="bold" text-anchor="middle" fill="#000" >M</text>
<rect x="219.10000000000002" y="786" width="49" height="27" fill="#fff" stroke="#e8e8e8" stroke-width="2" />
<text x="262.3" y="804" font-size="12" font-weight="normal" text-anchor="end" fill="#000" >99 %</text>
<ellipse cx="208.8" cy="836" rx="16.5" ry="11" fill="#00ff00" stroke="#000" stroke-width="1"/>
<text x="208.8" y="839.6" font-size="10" font-weight="normal" text-anchor="middle" fill="#000"  letter-spacing="0.15">BYA</text>
<polygon points="366.2,784.5 378.8,784.5 366.2,810.5 378.8,810.5" fill="#fff" stroke="none" stroke-width="1" />
<polygon points="372.5,784.5 366.2,784.5 372.5,797.5" fill="#00ff00" stroke="none" stroke-width="1" />
<polygon points="372.5,810.5 378.8,810.5 372.5,797.5" fill="#00ff00" stroke="none" stroke-width="1" />
<polygon points="366.2,784.5 378.8,784.5 366.2,810.5 378.8,810.5" fill="none" stroke="#000" stroke-width="1.1" stroke-linejoin="miter"/>
<line x1="367.5" y1="797.5" x2="372.5" y2="797.5" stroke="#000" stroke-width="1" />
<circle cx="363.1" cy="797.5" r="5.2" fill="#fff" stroke="#000" stroke-width="1"/>
<text x="362.2" y="800.1" font-size="7" font-weight="bold" text-anchor="middle" fill="#000" >M</text>
<rect x="382.8" y="786" width="49" height="27" fill="#fff" stroke="#e8e8e8" stroke-width="2" />
<text x="426.0" y="804" font-size="12" font-weight="normal" text-anchor="end" fill="#000" >19 %</text>
<ellipse cx="372.5" cy="836" rx="16.5" ry="11" fill="#fff" stroke="#000" stroke-width="1"/>
<text x="372.5" y="839.6" font-size="10" font-weight="normal" text-anchor="middle" fill="#000"  letter-spacing="0.15">BYA</text>
<polygon points="499.2,784.5 511.8,784.5 499.2,810.5 511.8,810.5" fill="#fff" stroke="none" stroke-width="1" />
<polygon points="505.5,784.5 499.2,784.5 505.5,797.5" fill="#00ff00" stroke="none" stroke-width="1" />
<polygon points="505.5,810.5 511.8,810.5 505.5,797.5" fill="#00ff00" stroke="none" stroke-width="1" />
<polygon points="499.2,784.5 511.8,784.5 499.2,810.5 511.8,810.5" fill="none" stroke="#000" stroke-width="1.1" stroke-linejoin="miter"/>
<line x1="500.5" y1="797.5" x2="505.5" y2="797.5" stroke="#000" stroke-width="1" />
<circle cx="496.1" cy="797.5" r="5.2" fill="#fff" stroke="#000" stroke-width="1"/>
<text x="495.2" y="800.1" font-size="7" font-weight="bold" text-anchor="middle" fill="#000" >M</text>
<rect x="515.8" y="786" width="49" height="27" fill="#fff" stroke="#e8e8e8" stroke-width="2" />
<text x="559.0" y="804" font-size="12" font-weight="normal" text-anchor="end" fill="#000" >20 %</text>
<ellipse cx="505.5" cy="836" rx="16.5" ry="11" fill="#fff" stroke="#000" stroke-width="1"/>
<text x="505.5" y="839.6" font-size="10" font-weight="normal" text-anchor="middle" fill="#000"  letter-spacing="0.15">BYA</text>
<polygon points="693.0,784.5 705.5999999999999,784.5 693.0,810.5 705.5999999999999,810.5" fill="#fff" stroke="none" stroke-width="1" />
<polygon points="699.3,784.5 693.0,784.5 699.3,797.5" fill="#00ff00" stroke="none" stroke-width="1" />
<polygon points="699.3,810.5 705.5999999999999,810.5 699.3,797.5" fill="#00ff00" stroke="none" stroke-width="1" />
<polygon points="693.0,784.5 705.5999999999999,784.5 693.0,810.5 705.5999999999999,810.5" fill="none" stroke="#000" stroke-width="1.1" stroke-linejoin="miter"/>
<line x1="694.3" y1="797.5" x2="699.3" y2="797.5" stroke="#000" stroke-width="1" />
<circle cx="689.9" cy="797.5" r="5.2" fill="#fff" stroke="#000" stroke-width="1"/>
<text x="689.0" y="800.1" font-size="7" font-weight="bold" text-anchor="middle" fill="#000" >M</text>
<rect x="709.5999999999999" y="786" width="49" height="27" fill="#fff" stroke="#e8e8e8" stroke-width="2" />
<text x="752.8" y="804" font-size="12" font-weight="normal" text-anchor="end" fill="#000" >13 %</text>
<ellipse cx="699.3" cy="836" rx="16.5" ry="11" fill="#fff" stroke="#000" stroke-width="1"/>
<text x="699.3" y="839.6" font-size="10" font-weight="normal" text-anchor="middle" fill="#000"  letter-spacing="0.15">BYA</text>
<polygon points="813.7,784.5 826.3,784.5 813.7,810.5 826.3,810.5" fill="#fff" stroke="none" stroke-width="1" />
<polygon points="820,784.5 813.7,784.5 820,797.5" fill="#00ff00" stroke="none" stroke-width="1" />
<polygon points="820,810.5 826.3,810.5 820,797.5" fill="#00ff00" stroke="none" stroke-width="1" />
<polygon points="813.7,784.5 826.3,784.5 813.7,810.5 826.3,810.5" fill="none" stroke="#000" stroke-width="1.1" stroke-linejoin="miter"/>
<line x1="815" y1="797.5" x2="820" y2="797.5" stroke="#000" stroke-width="1" />
<circle cx="810.6" cy="797.5" r="5.2" fill="#fff" stroke="#000" stroke-width="1"/>
<text x="809.7" y="800.1" font-size="7" font-weight="bold" text-anchor="middle" fill="#000" >M</text>
<rect x="830.3" y="786" width="49" height="27" fill="#fff" stroke="#e8e8e8" stroke-width="2" />
<text x="873.5" y="804" font-size="12" font-weight="normal" text-anchor="end" fill="#000" >13 %</text>
<ellipse cx="820" cy="836" rx="16.5" ry="11" fill="#fff" stroke="#000" stroke-width="1"/>
<text x="820" y="839.6" font-size="10" font-weight="normal" text-anchor="middle" fill="#000"  letter-spacing="0.15">BYA</text>
<polygon points="934.2,784.5 946.8,784.5 934.2,810.5 946.8,810.5" fill="#fff" stroke="none" stroke-width="1" />
<polygon points="940.5,784.5 934.2,784.5 940.5,797.5" fill="#00ff00" stroke="none" stroke-width="1" />
<polygon points="940.5,810.5 946.8,810.5 940.5,797.5" fill="#00ff00" stroke="none" stroke-width="1" />
<polygon points="934.2,784.5 946.8,784.5 934.2,810.5 946.8,810.5" fill="none" stroke="#000" stroke-width="1.1" stroke-linejoin="miter"/>
<line x1="935.5" y1="797.5" x2="940.5" y2="797.5" stroke="#000" stroke-width="1" />
<circle cx="931.1" cy="797.5" r="5.2" fill="#fff" stroke="#000" stroke-width="1"/>
<text x="930.2" y="800.1" font-size="7" font-weight="bold" text-anchor="middle" fill="#000" >M</text>
<rect x="950.8" y="786" width="49" height="27" fill="#fff" stroke="#e8e8e8" stroke-width="2" />
<text x="994.0" y="804" font-size="12" font-weight="normal" text-anchor="end" fill="#000" >38 %</text>
<ellipse cx="940.5" cy="836" rx="16.5" ry="11" fill="#fff" stroke="#000" stroke-width="1"/>
<text x="940.5" y="839.6" font-size="10" font-weight="normal" text-anchor="middle" fill="#000"  letter-spacing="0.15">BYA</text>
<polygon points="1055.7,784.5 1068.3,784.5 1055.7,810.5 1068.3,810.5" fill="#fff" stroke="none" stroke-width="1" />
<polygon points="1055.7,784.5 1068.3,784.5 1055.7,810.5 1068.3,810.5" fill="none" stroke="#000" stroke-width="1.1" stroke-linejoin="miter"/>
<line x1="1057" y1="797.5" x2="1062" y2="797.5" stroke="#000" stroke-width="1" />
<circle cx="1052.6" cy="797.5" r="5.2" fill="#fff" stroke="#000" stroke-width="1"/>
<text x="1051.7" y="800.1" font-size="7" font-weight="bold" text-anchor="middle" fill="#000" >M</text>
<line x1="1069.7" y1="714.2" x2="1092" y2="729.4" stroke="#000" stroke-width="1.1" />
<ellipse cx="1075.6" cy="706" rx="9.8" ry="3.1" fill="#999" transform="rotate(-54 1075.6 706)"/>
<ellipse cx="1063.8" cy="722.4" rx="9.8" ry="3.1" fill="#999" transform="rotate(-54 1063.8 722.4)"/>
<circle cx="1069.5" cy="714.3" r="1.5" fill="#000"/>
<circle cx="1105" cy="737" r="15" fill="#00ff00" stroke="#000" stroke-width="1"/>
<path d="M1099.9,742.3 L1100.5,730.6 L1105,739.6 L1109.5,730.6 L1110.1,742.3" fill="none" stroke="#000" stroke-width="1.7" stroke-linejoin="miter"/>
<line x1="626" y1="560" x2="626" y2="833" stroke="#0070aa" stroke-width="2.2" />
<line x1="651.8" y1="560" x2="651.8" y2="833" stroke="#0070aa" stroke-width="2.2" />
<polygon points="626.2,853.5 617.6,832.5 634.8000000000001,832.5" fill="#0070aa" stroke="none" stroke-width="1" />
<polygon points="652,853.5 643.4,832.5 660.6,832.5" fill="#0070aa" stroke="none" stroke-width="1" />
<polyline points="1148,758 1148,876.9 1427,876.9" fill="none" stroke="#bd8064" stroke-width="1.5" stroke-linejoin="miter" />
<polygon points="1148,738.8 1139.3,758.0999999999999 1156.7,758.0999999999999" fill="#a0573a" stroke="none" stroke-width="1" />
<line x1="58" y1="887.8" x2="1427" y2="887.8" stroke="#bd8064" stroke-width="1.5" />
<polygon points="1298.4,876.9 1319.6000000000001,868.6999999999999 1319.6000000000001,885.1" fill="#a0573a" stroke="none" stroke-width="1" />
<polygon points="1320.4,887.8 1341.8000000000002,879.5999999999999 1341.8000000000002,896.0" fill="#a0573a" stroke="none" stroke-width="1" />
<text x="68" y="883.5" font-size="10" font-weight="normal" text-anchor="start" fill="#000"  letter-spacing="0.15">Rücklaufschlamm</text>
<rect x="1427" y="804.5" width="172" height="29.7" fill="#00c6f2" stroke="none" stroke-width="1" />
<text x="1513.0" y="823.65" font-size="12" font-weight="bold" text-anchor="middle" fill="#000" >Gebläsestation</text>
<rect x="1427" y="868.6" width="172" height="29.4" fill="#00c6f2" stroke="none" stroke-width="1" />
<text x="1513.0" y="887.6" font-size="12" font-weight="bold" text-anchor="middle" fill="#000" >Rücklaufschlamm</text>
<rect x="549.3" y="853.8" width="171.5" height="29.3" fill="#00c6f2" stroke="none" stroke-width="1" />
<text x="635.05" y="872.7499999999999" font-size="12" font-weight="bold" text-anchor="middle" fill="#000" >Hebewerk 1 + 2</text>
<rect x="549" y="901.3" width="172" height="29" fill="#00cc00" stroke="none" stroke-width="1" />
<text x="635.0" y="920.0999999999999" font-size="12" font-weight="bold" text-anchor="middle" fill="#000" >Parameter</text>
<rect x="738.8" y="901.3" width="171.7" height="29" fill="#b57fe5" stroke="none" stroke-width="1" />
<text x="824.65" y="920.0999999999999" font-size="12" font-weight="bold" text-anchor="middle" fill="#000" >Befehle</text>
<rect x="932" y="901.3" width="172.3" height="29" fill="#bbbbbb" stroke="none" stroke-width="1" />
<text x="1018.15" y="920.0999999999999" font-size="12" font-weight="bold" text-anchor="middle" fill="#000" >Trending</text>
<rect x="1177" y="582" width="472" height="192" fill="#fff" stroke="#000" stroke-width="2"/>
<text x="1213" y="596" font-size="12" font-weight="bold" text-anchor="start" fill="#000" >Spülprogramm, Management:</text>
<rect x="1187" y="609" width="222" height="56.5" fill="#fff" stroke="#eaeaea" stroke-width="2" />
<rect x="1188" y="638" width="197.5" height="26.4" fill="#80ffa0" stroke="none" stroke-width="1" />
<text x="1192" y="627" font-size="12" font-weight="normal" text-anchor="start" fill="#000" >Belüftung, Belueftungs-Manager</text>
<text x="1192" y="655" font-size="12" font-weight="normal" text-anchor="start" fill="#000" >Keine Spülung</text>
<text x="1397.5" y="655" font-size="12" font-weight="normal" text-anchor="middle" fill="#000" >10</text>
<text x="1201" y="691" font-size="12" font-weight="bold" text-anchor="start" fill="#000" >Spülprogramm, Anox-Zone:</text>
<text x="1433" y="686" font-size="12" font-weight="bold" text-anchor="start" fill="#000" >Spülprogramm, Belüftungszone:</text>
<rect x="1188" y="703" width="222" height="56.5" fill="#fff" stroke="#eaeaea" stroke-width="2" />
<rect x="1189" y="732" width="197.5" height="25.6" fill="#00cccc" stroke="none" stroke-width="1" />
<text x="1193" y="721" font-size="12" font-weight="normal" text-anchor="start" fill="#000" >Belüftung, Spülprog. Anox-Zone</text>
<text x="1193" y="749" font-size="12" font-weight="normal" text-anchor="start" fill="#000" >Bereit</text>
<text x="1398.5" y="749" font-size="12" font-weight="normal" text-anchor="middle" fill="#000" >01</text>
<rect x="1420" y="703" width="222" height="56.5" fill="#fff" stroke="#eaeaea" stroke-width="2" />
<rect x="1421" y="732" width="197.5" height="25.6" fill="#00cccc" stroke="none" stroke-width="1" />
<text x="1425" y="721" font-size="12" font-weight="normal" text-anchor="start" fill="#000" >Belüftung, Spülprog. Belüftung-Zone</text>
<text x="1425" y="749" font-size="12" font-weight="normal" text-anchor="start" fill="#000" >Bereit</text>
<text x="1630.5" y="749" font-size="12" font-weight="normal" text-anchor="middle" fill="#000" >01</text>
</svg>
</body></html>
